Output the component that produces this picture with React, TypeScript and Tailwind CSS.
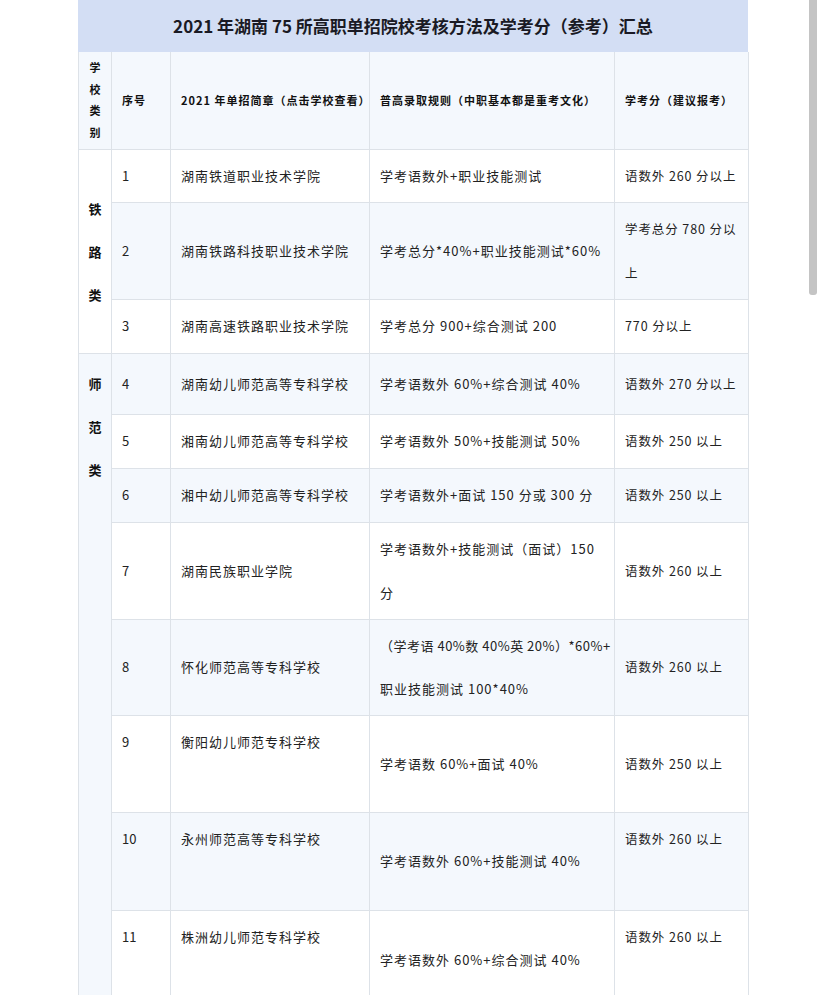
import type { ReactNode } from "react";

type Row = {
  no: string;
  name: string;
  rule: ReactNode;
  score: ReactNode;
  rowClass: string;
  nameTop?: boolean;
  scoreTop?: boolean;
};

const rows: Row[] = [
  { no: "1", name: "湖南铁道职业技术学院", rule: "学考语数外+职业技能测试", score: "语数外 260 分以上", rowClass: "h-[53px] bg-white" },
  {
    no: "2",
    name: "湖南铁路科技职业技术学院",
    rule: "学考总分*40%+职业技能测试*60%",
    score: (
      <>
        学考总分 780 分以
        <br />上
      </>
    ),
    rowClass: "h-[97px] bg-[#f4f8fd]",
  },
  { no: "3", name: "湖南高速铁路职业技术学院", rule: "学考总分 900+综合测试 200", score: "770 分以上", rowClass: "h-[54px] bg-white" },
  { no: "4", name: "湖南幼儿师范高等专科学校", rule: "学考语数外 60%+综合测试 40%", score: "语数外 270 分以上", rowClass: "h-[61px] bg-[#f4f8fd]" },
  { no: "5", name: "湘南幼儿师范高等专科学校", rule: "学考语数外 50%+技能测试 50%", score: "语数外 250 以上", rowClass: "h-[54px] bg-white" },
  { no: "6", name: "湘中幼儿师范高等专科学校", rule: "学考语数外+面试 150 分或 300 分", score: "语数外 250 以上", rowClass: "h-[54px] bg-[#f4f8fd]" },
  {
    no: "7",
    name: "湖南民族职业学院",
    rule: (
      <>
        学考语数外+技能测试（面试）150
        <br />分
      </>
    ),
    score: "语数外 260 以上",
    rowClass: "h-[97px] bg-white",
  },
  {
    no: "8",
    name: "怀化师范高等专科学校",
    rule: (
      <>
        <span className="tracking-[0.5px]">（学考语 40%数 40%英 20%）*60%+</span>
        <br />职业技能测试 100*40%
      </>
    ),
    score: "语数外 260 以上",
    rowClass: "h-[96px] bg-[#f4f8fd]",
  },
  { no: "9", name: "衡阳幼儿师范专科学校", rule: "学考语数 60%+面试 40%", score: "语数外 250 以上", rowClass: "h-[97px] bg-white", nameTop: true },
  { no: "10", name: "永州师范高等专科学校", rule: "学考语数外 60%+技能测试 40%", score: "语数外 260 以上", rowClass: "h-[98px] bg-[#f4f8fd]", nameTop: true, scoreTop: true },
  { no: "11", name: "株洲幼儿师范专科学校", rule: "学考语数外 60%+综合测试 40%", score: "语数外 260 以上", rowClass: "h-[100px] bg-white", nameTop: true, scoreTop: true },
];

const cell = "border border-[#dde2e8] px-[10px] py-[4px] leading-[43.5px]";
const head = "border border-t-0 border-[#dde2e8] px-[10px] whitespace-nowrap tracking-[1px]";

function Category({ text, top }: { text: string; top?: boolean }) {
  return (
    <div className={top ? "pt-[8px]" : ""}>
      {text.split("").map((c) => (
        <div key={c} className="h-[43px] leading-[43px] text-[13px] font-bold text-[#111]">
          {c}
        </div>
      ))}
    </div>
  );
}

export default function App() {
  return (
    <div
      className="relative min-h-[995px] w-[828px] overflow-hidden bg-white text-[#222]"
      style={{ fontFamily: '"Noto Sans CJK SC", "Noto Sans", sans-serif' }}
    >
      <div className="ml-[78px] w-[670px]">
        <div className="flex h-[52px] items-center justify-center bg-[#d3def4] text-[17px] font-bold text-[#1a1a24]">
          2021 年湖南 75 所高职单招院校考核方法及学考分（参考）汇总
        </div>
        <table className="w-[670px] table-fixed border-collapse">
          <colgroup>
            <col className="w-[33px]" />
            <col className="w-[59px]" />
            <col className="w-[199px]" />
            <col className="w-[245px]" />
            <col className="w-[134px]" />
          </colgroup>
          <tbody>
            <tr className="h-[97px] bg-[#f4f8fd] text-[11px] font-bold text-[#111]">
              <td className="border border-t-0 border-[#dde2e8] p-0 text-center align-middle">
                {"学校类别".split("").map((c) => (
                  <div key={c} className="leading-[21.5px]">
                    {c}
                  </div>
                ))}
              </td>
              <td className={head}>序号</td>
              <td className={head}>2021 年单招简章（点击学校查看）</td>
              <td className={head}>普高录取规则（中职基本都是重考文化）</td>
              <td className={head}>学考分（建议报考）</td>
            </tr>
            {rows.map((r, i) => (
              <tr key={r.no} className={r.rowClass}>
                {i === 0 && (
                  <td rowSpan={3} className="border border-[#dde2e8] bg-white p-0 text-center align-middle">
                    <Category text="铁路类" />
                  </td>
                )}
                {i === 3 && (
                  <td rowSpan={8} className="border border-[#dde2e8] bg-[#f4f8fd] p-0 text-center align-top">
                    <Category text="师范类" top />
                  </td>
                )}
                <td className={`${cell} text-[13px] ${r.nameTop ? "align-top" : "align-middle"}`}>{r.no}</td>
                <td className={`${cell} text-[13px] tracking-[1px] whitespace-nowrap ${r.nameTop ? "align-top" : "align-middle"}`}>
                  {r.name}
                </td>
                <td className={`${cell} text-[13px] tracking-[1px] whitespace-nowrap align-middle`}>{r.rule}</td>
                <td className={`${cell} text-[12.5px] tracking-[0.9px] whitespace-nowrap ${r.scoreTop ? "align-top" : "align-middle"}`}>
                  {r.score}
                </td>
              </tr>
            ))}
          </tbody>
        </table>
      </div>
      <div className="absolute right-[11px] top-0 h-[295px] w-[8px] rounded-b-[3px] bg-[#c4c4c4]" />
    </div>
  );
}
